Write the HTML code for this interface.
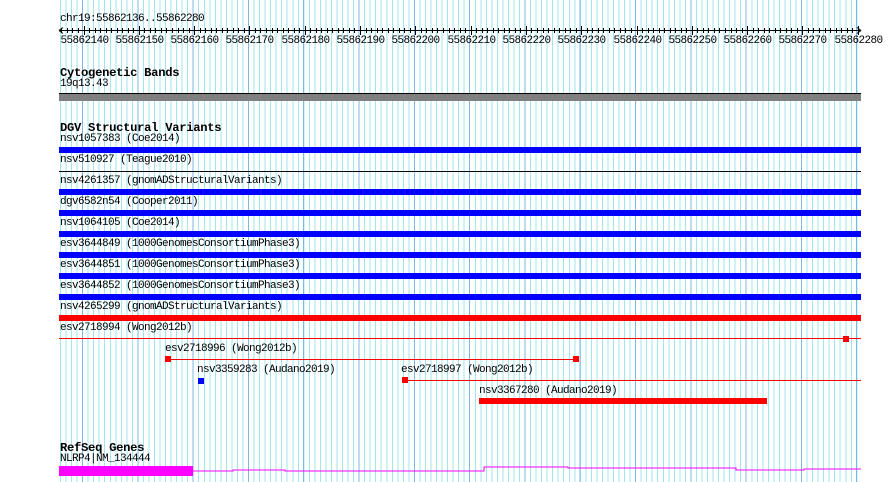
<!DOCTYPE html>
<html><head><style>
body{margin:0;width:890px;height:482px;background:#fff;position:relative;overflow:hidden;font-family:"Liberation Mono",monospace;}
.g{position:absolute;left:60px;top:0;width:802px;height:482px;
background-image:repeating-linear-gradient(90deg,#9fe6ee 0,#9fe6ee 1px,transparent 1px,transparent 5.53px);}
.G{position:absolute;left:82px;top:0;width:780px;height:482px;
background-image:repeating-linear-gradient(90deg,#7ab8e6 0,#7ab8e6 1px,transparent 1px,transparent 55.3px);}
.t{position:absolute;font-size:11px;letter-spacing:-0.6px;line-height:11px;color:#000;white-space:pre;margin-top:-1px;}
.b{position:absolute;font-size:12.2px;letter-spacing:-0.3px;font-weight:bold;line-height:12px;white-space:pre;}
.r{position:absolute;}
</style></head><body>
<div class="g"></div><div class="G"></div>
<div class="t" style="left:60px;top:15px">chr19:55862136..55862280</div>
<svg class="r" style="left:0;top:0" width="890" height="50">
<line x1="59" y1="30.5" x2="861" y2="30.5" stroke="#000"/>
<path d="M59 30.5 l4 -3 M59 30.5 l4 3 M861 30.5 l-4 -3 M861 30.5 l-4 3" stroke="#000"/>
<g stroke="#000" id="tk"></g>
</svg>
<div id="lab"></div>
<div class="b" style="left:60px;top:67px">Cytogenetic Bands</div>
<div class="t" style="left:60px;top:80px">19q13.43</div>
<div class="r" style="left:59px;top:93px;width:802px;height:1px;background:#000"></div>
<div class="r" style="left:59px;top:94px;width:802px;height:7px;background:#808080"></div>
<div class="b" style="left:60px;top:122px">DGV Structural Variants</div>
<div class="t" style="left:60px;top:135px">nsv1057383 (Coe2014)</div>
<div class="r" style="left:59px;top:147px;width:802px;height:6px;background:#0000ff"></div>
<div class="t" style="left:60px;top:156px">nsv510927 (Teague2010)</div>
<div class="r" style="left:59px;top:171px;width:802px;height:1px;background:#000"></div>
<div class="t" style="left:60px;top:177px">nsv4261357 (gnomADStructuralVariants)</div>
<div class="r" style="left:59px;top:189px;width:802px;height:6px;background:#0000ff"></div>
<div class="t" style="left:60px;top:198px">dgv6582n54 (Cooper2011)</div>
<div class="r" style="left:59px;top:210px;width:802px;height:6px;background:#0000ff"></div>
<div class="t" style="left:60px;top:219px">nsv1064105 (Coe2014)</div>
<div class="r" style="left:59px;top:231px;width:802px;height:6px;background:#0000ff"></div>
<div class="t" style="left:60px;top:240px">esv3644849 (1000GenomesConsortiumPhase3)</div>
<div class="r" style="left:59px;top:252px;width:802px;height:6px;background:#0000ff"></div>
<div class="t" style="left:60px;top:261px">esv3644851 (1000GenomesConsortiumPhase3)</div>
<div class="r" style="left:59px;top:273px;width:802px;height:6px;background:#0000ff"></div>
<div class="t" style="left:60px;top:282px">esv3644852 (1000GenomesConsortiumPhase3)</div>
<div class="r" style="left:59px;top:294px;width:802px;height:6px;background:#0000ff"></div>
<div class="t" style="left:60px;top:303px">nsv4265299 (gnomADStructuralVariants)</div>
<div class="r" style="left:59px;top:315px;width:802px;height:6px;background:#ff0000"></div>
<div class="t" style="left:60px;top:324px">esv2718994 (Wong2012b)</div>
<div class="r" style="left:59px;top:338px;width:802px;height:1px;background:#ff0000"></div>
<div class="r" style="left:843px;top:336px;width:6px;height:6px;background:#ff0000"></div>
<div class="t" style="left:165px;top:345px">esv2718996 (Wong2012b)</div>
<div class="r" style="left:165px;top:359px;width:412px;height:1px;background:#ff0000"></div>
<div class="r" style="left:165px;top:356px;width:6px;height:6px;background:#ff0000"></div>
<div class="r" style="left:573px;top:356px;width:6px;height:6px;background:#ff0000"></div>
<div class="t" style="left:197px;top:366px">nsv3359283 (Audano2019)</div>
<div class="r" style="left:198px;top:378px;width:6px;height:6px;background:#0000ff"></div>
<div class="t" style="left:401px;top:366px">esv2718997 (Wong2012b)</div>
<div class="r" style="left:402px;top:380px;width:459px;height:1px;background:#ff0000"></div>
<div class="r" style="left:402px;top:377px;width:6px;height:6px;background:#ff0000"></div>
<div class="t" style="left:479px;top:387px">nsv3367280 (Audano2019)</div>
<div class="r" style="left:479px;top:398px;width:288px;height:6px;background:#ff0000"></div>
<div class="b" style="left:60px;top:442px">RefSeq Genes</div>
<div class="t" style="left:60px;top:455px">NLRP4|NM_134444</div>
<div class="r" style="left:59px;top:466px;width:134px;height:10px;background:#ff00ff"></div>
<svg class="r" style="left:0;top:460px" width="890" height="22">
<path d="M193 11 H233 V10 H285 V11 H484 V7 H568 V8 H736 V10 H804 V9 H861" stroke="#ff00ff" fill="none"/>
</svg>
<script>
var tk=document.getElementById('tk'),s='',l='';
for(var i=0;i<=144;i++){var x=Math.round(61.4+i*5.53)+0.5;var maj=((136+i)%10==0);
s+='<line x1="'+x+'" x2="'+x+'" y1="'+(maj?26:28)+'" y2="'+(maj?35:33)+'"/>';
if(maj){l+='<div class="t" style="left:'+(x-24)+'px;top:37px">'+(55862000+136+i)+'</div>';}}
tk.innerHTML=s;document.getElementById('lab').innerHTML=l;
</script>
</body></html>
